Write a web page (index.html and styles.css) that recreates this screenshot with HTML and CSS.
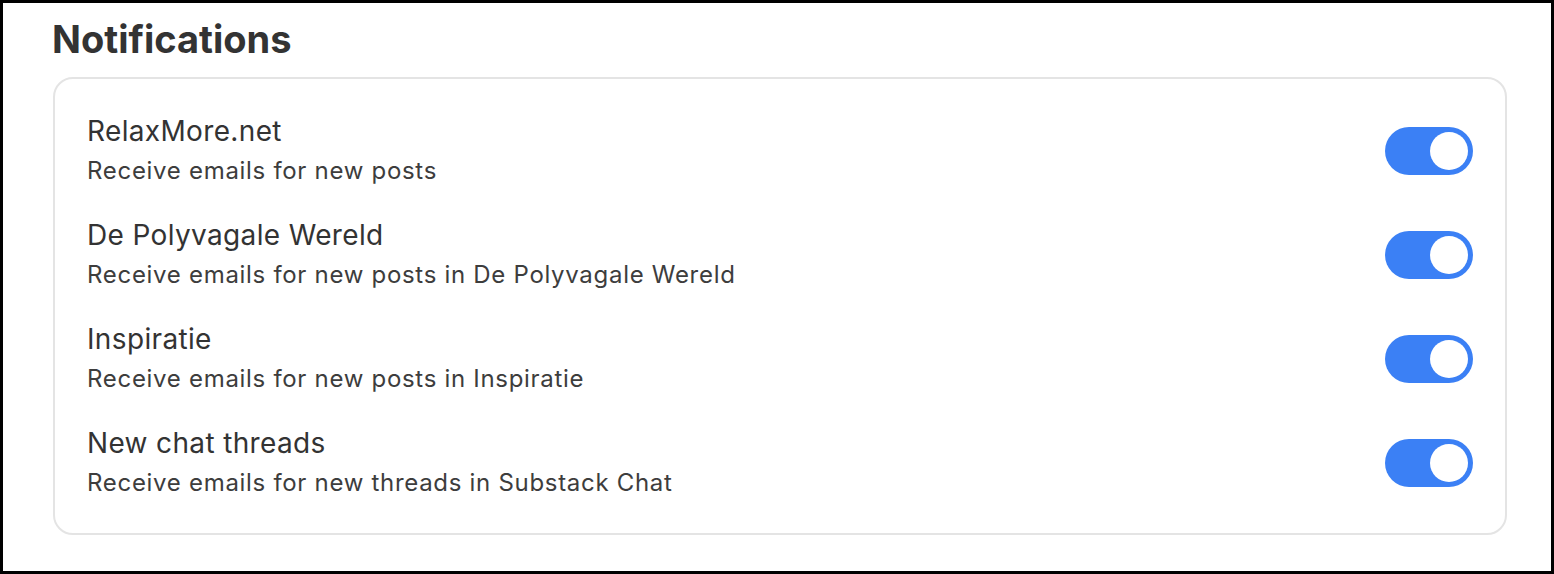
FILE: index.html
```html
<!DOCTYPE html>
<html lang="en">
<head>
  <meta charset="UTF-8">
  <meta name="viewport" content="width=device-width, initial-scale=1.0">
  <title>Notifications</title>
  <link rel="stylesheet" href="styles.css">
</head>
<body>
  <div class="frame">
    <h1 class="title">Notifications</h1>

    <div class="card">
      <div class="row">
        <div class="text">
          <div class="name">RelaxMore.net</div>
          <div class="desc">Receive emails for new posts</div>
        </div>
        <button class="toggle on" aria-pressed="true"><span class="knob"></span></button>
      </div>
      <div class="row">
        <div class="text">
          <div class="name">De Polyvagale Wereld</div>
          <div class="desc">Receive emails for new posts in De Polyvagale Wereld</div>
        </div>
        <button class="toggle on" aria-pressed="true"><span class="knob"></span></button>
      </div>
      <div class="row">
        <div class="text">
          <div class="name">Inspiratie</div>
          <div class="desc">Receive emails for new posts in Inspiratie</div>
        </div>
        <button class="toggle on" aria-pressed="true"><span class="knob"></span></button>
      </div>
      <div class="row">
        <div class="text">
          <div class="name">New chat threads</div>
          <div class="desc">Receive emails for new threads in Substack Chat</div>
        </div>
        <button class="toggle on" aria-pressed="true"><span class="knob"></span></button>
      </div>
    </div>
  </div>
</body>
</html>
```

FILE: styles.css
```css
:root {
  --blue: #3b80f5;
  --text-primary: #333333;
  --text-secondary: #3d3d3d;
  --border-color: #e4e4e4;
}

* {
  box-sizing: border-box;
  margin: 0;
  padding: 0;
}

html, body {
  background: white;
}

body {
  font-family: 'Inter', 'Liberation Sans', sans-serif;
  color: var(--text-primary);
}

.frame {
  width: 1554px;
  height: 574px;
  border: 3px solid black;
  padding: 14px 44px 0 49px;
}

.title {
  font-size: 38px;
  font-weight: 700;
  line-height: 44px;
  color: #333;
  margin-bottom: 16px;
}

.card {
  border: 2px solid var(--border-color);
  border-radius: 20px;
  padding: 35px 32px 33px 32px;
  margin-left: 1px;
  display: flex;
  flex-direction: column;
  gap: 30px;
}

.row {
  display: flex;
  align-items: center;
  justify-content: space-between;
}

.name {
  font-size: 28px;
  line-height: 34px;
  letter-spacing: 0.35px;
  color: var(--text-primary);
}

.desc {
  font-size: 24px;
  line-height: 34px;
  letter-spacing: 0.7px;
  margin-top: 6px;
  color: var(--text-secondary);
}

.toggle {
  width: 88px;
  height: 48px;
  border: none;
  border-radius: 24px;
  background: #d1d5db;
  padding: 5px;
  display: flex;
  cursor: pointer;
}

.toggle.on {
  background: var(--blue);
  justify-content: flex-end;
}

.knob {
  width: 38px;
  height: 38px;
  border-radius: 50%;
  background: white;
}
```
